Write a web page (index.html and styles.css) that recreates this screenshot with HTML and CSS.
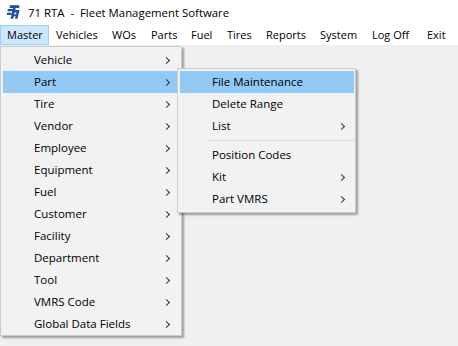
FILE: index.html
```html
<!DOCTYPE html>
<html>
<head>
<meta charset="utf-8">
<link rel="stylesheet" href="styles.css">
</head>
<body>
<div class="window">
  <div class="titlebar">
    <svg class="logo" width="13" height="14" viewBox="0 0 13 14">
      <path d="M3 0.3h9.6l-0.6 2.6h-3.3l-2.5 10.8h-2.7l2.5-10.8h-3.4z" fill="#1f4fa0"/>
      <path d="M0.9 4h5.6l-0.5 2.3h-5.6z" fill="#1f4fa0"/>
      <path d="M0 7.7h4.8l-0.5 2.3h-4.8z" fill="#1f4fa0"/>
      <path d="M7.7 5.1h4.9l-2.1 8.6h-2.5l0.6-2.4h-1.7l0.5-2.1h1.7l0.4-1.8h-2.3z" fill="#1f4fa0"/>
    </svg>
    <span class="title">71 RTA  -  Fleet Management Software</span>
  </div>
  <div class="menubar">
    <span class="mi active">Master</span>
    <span class="mi">Vehicles</span>
    <span class="mi">WOs</span>
    <span class="mi">Parts</span>
    <span class="mi">Fuel</span>
    <span class="mi">Tires</span>
    <span class="mi">Reports</span>
    <span class="mi">System</span>
    <span class="mi">Log Off</span>
    <span class="mi">Exit</span>
  </div>
  <div class="client"></div>

  <div class="menu main-menu">
    <div class="item"><span>Vehicle</span><i class="arrow"></i></div>
    <div class="item hl"><span>Part</span><i class="arrow"></i></div>
    <div class="item"><span>Tire</span><i class="arrow"></i></div>
    <div class="item"><span>Vendor</span><i class="arrow"></i></div>
    <div class="item"><span>Employee</span><i class="arrow"></i></div>
    <div class="item"><span>Equipment</span><i class="arrow"></i></div>
    <div class="item"><span>Fuel</span><i class="arrow"></i></div>
    <div class="item"><span>Customer</span><i class="arrow"></i></div>
    <div class="item"><span>Facility</span><i class="arrow"></i></div>
    <div class="item"><span>Department</span><i class="arrow"></i></div>
    <div class="item"><span>Tool</span><i class="arrow"></i></div>
    <div class="item"><span>VMRS Code</span><i class="arrow"></i></div>
    <div class="item"><span>Global Data Fields</span><i class="arrow"></i></div>
  </div>

  <div class="menu sub-menu">
    <div class="item hl"><span>File Maintenance</span></div>
    <div class="item"><span>Delete Range</span></div>
    <div class="item"><span>List</span><i class="arrow"></i></div>
    <div class="sep"></div>
    <div class="item"><span>Position Codes</span></div>
    <div class="item"><span>Kit</span><i class="arrow"></i></div>
    <div class="item"><span>Part VMRS</span><i class="arrow"></i></div>
  </div>
</div>
</body>
</html>
```
FILE: styles.css
```css
* { box-sizing: border-box; }
html, body {
  margin: 0;
  padding: 0;
}
body {
  width: 458px;
  height: 346px;
  background: #f0f0f0;
  font-family: "Open Sans", "Noto Sans", sans-serif;
  font-size: 11.5px;
  color: #000;
  overflow: hidden;
}
.window {
  position: relative;
  width: 458px;
  height: 346px;
  display: flex;
  flex-direction: column;
}
.titlebar {
  height: 25px;
  background: #fff;
  display: flex;
  align-items: center;
  padding-left: 7px;
}
.logo {
  display: block;
  margin-right: 8px;
  margin-top: -1px;
}
.title {
  white-space: pre;
  font-size: 11.4px;
  margin-top: -1px;
}
.menubar {
  height: 20px;
  background: #fff;
  display: grid;
  grid-template-columns: 49px 56px 39px 40px 36px 39px 54px 52px 55px 32px;
  font-size: 11px;
}
.mi {
  display: flex;
  align-items: center;
  padding: 0 0 1px 6px;
  border: 1px solid transparent;
  white-space: nowrap;
}
.mi.active {
  background: #cce8ff;
  border-color: #99d1ff;
}
.client {
  flex: 1;
  background: #f0f0f0;
}
.menu {
  position: absolute;
  background: #f2f2f2;
  border: 1px solid #cccccc;
  box-shadow: 2px 2px 2px rgba(0, 0, 0, 0.35);
  padding: 2px;
}
.main-menu {
  left: 0;
  top: 46px;
  width: 182px;
  padding: 2px 2px 0 2px;
}
.sub-menu {
  left: 177px;
  top: 68px;
  width: 179px;
  padding: 2px 1px 2px 2px;
  z-index: 2;
}
.item {
  height: 22px;
  display: flex;
  align-items: center;
  justify-content: space-between;
  padding: 0 9px 0 31px;
  white-space: nowrap;
}
.sub-menu .item {
  padding-left: 32px;
}
.item span {
  margin-top: -1px;
}
.item.hl {
  background: #91c9f7;
}
.arrow {
  display: block;
  width: 5px;
  height: 5px;
  border-right: 1.2px solid #333;
  border-top: 1.2px solid #333;
  transform: rotate(45deg);
  margin-right: 1px;
}
.sep {
  height: 7px;
  margin-left: 28px;
  display: flex;
  align-items: center;
}
.sep::before {
  content: "";
  display: block;
  width: 100%;
  height: 1px;
  background: #d7d7d7;
}
```
